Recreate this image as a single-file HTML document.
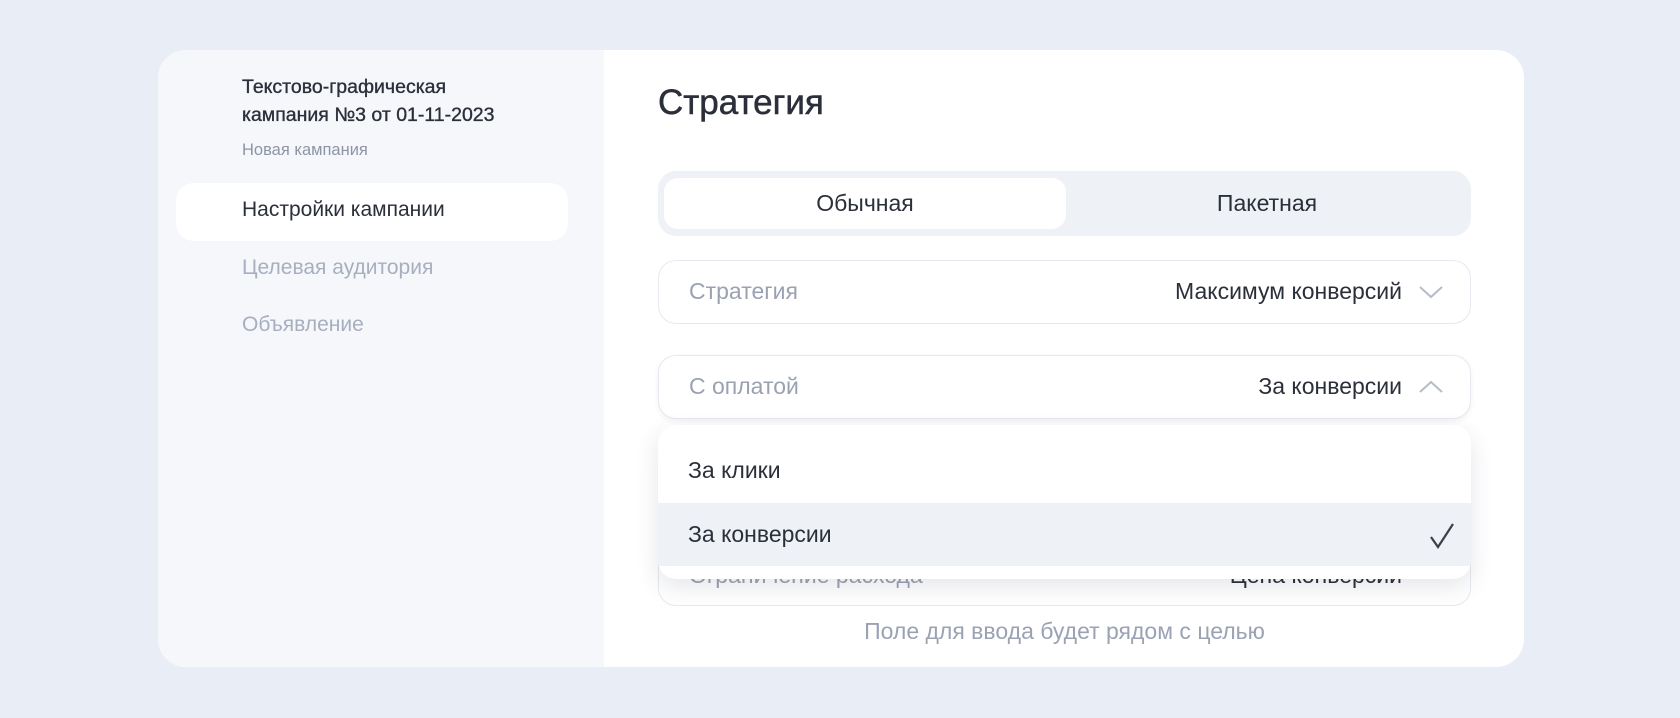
<!DOCTYPE html>
<html><head><meta charset="utf-8"><style>
*{box-sizing:border-box;margin:0;padding:0}
body{width:1680px;height:718px;background:#e9eef6;font-family:"Liberation Sans","DejaVu Sans",sans-serif;position:relative;overflow:hidden;color:#2b2f3a}
.card{position:absolute;left:158px;top:50px;width:1366px;height:617px;border-radius:28px;background:#fff;overflow:hidden}
.side{position:absolute;left:0;top:0;width:446px;height:100%;background:#f5f7fb}
.t{position:absolute;left:84px;font-size:19.5px;line-height:28px;color:#2b2f3a;white-space:nowrap}
.pill{position:absolute;left:18px;top:133px;width:392px;height:58px;border-radius:18px;background:#fff}
.nav{position:absolute;left:84px;font-size:21px;color:#a7afbf;white-space:nowrap}
.a{position:absolute;white-space:nowrap}
.field{position:absolute;left:500px;width:813px;height:64px;border:1.5px solid #e6e9ef;border-radius:18px;background:#fff}
.lab{position:absolute;left:30px;top:0;line-height:61px;font-size:23px;color:#9aa2b2;white-space:nowrap}
.val{position:absolute;right:68px;top:0;line-height:61px;font-size:23px;color:#2b2f3a;white-space:nowrap}
.chev{position:absolute;right:26px;top:23px}
</style></head><body>
<div class="card">
 <div class="side">
  <div class="t" style="top:23px;-webkit-text-stroke:0.35px #2b2f3a">Текстово-графическая<br>кампания №3 от 01-11-2023</div>
  <div class="t" style="top:86px;font-size:16.5px;color:#8d95a5">Новая кампания</div>
  <div class="pill"></div>
  <div class="nav" style="top:148px;color:#2b2f3a">Настройки кампании</div>
  <div class="nav" style="top:206px">Целевая аудитория</div>
  <div class="nav" style="top:263px">Объявление</div>
 </div>
 <div class="a" style="left:500px;top:33px;font-size:35px;-webkit-text-stroke:0.5px #2b2f3a;color:#2b2f3a">Стратегия</div>
 <div class="a" style="left:500px;top:121px;width:813px;height:65px;border-radius:18px;background:#eef1f6"></div>
 <div class="a" style="left:506px;top:128px;width:402px;height:51px;border-radius:14px;background:#fff"></div>
 <div class="a" style="left:506px;top:128px;width:402px;line-height:51px;text-align:center;font-size:23px">Обычная</div>
 <div class="a" style="left:908px;top:128px;width:402px;line-height:51px;text-align:center;font-size:23px">Пакетная</div>
 <div class="field" style="top:210px"><div class="lab">Стратегия</div><div class="val">Максимум конверсий</div>
  <svg class="chev" width="26" height="16" viewBox="0 0 26 16"><path d="M2 3 L13 13 L24 3" fill="none" stroke="#b5bcc9" stroke-width="2"/></svg></div>
 <div class="field" style="top:305px;box-shadow:0 2px 6px rgba(0,0,0,.06)"><div class="lab">С оплатой</div><div class="val">За конверсии</div>
  <svg class="chev" width="26" height="16" viewBox="0 0 26 16"><path d="M2 13 L13 3 L24 13" fill="none" stroke="#b5bcc9" stroke-width="2"/></svg></div>
 <div class="field" style="top:492px"><div class="lab" style="top:2px">Ограничение расхода</div><div class="val" style="top:2px">Цена конверсии</div></div>
 <div class="a" style="left:500px;top:375px;width:813px;height:154px;border-radius:18px;background:#fff;box-shadow:0 8px 24px rgba(40,50,80,.12);overflow:hidden">
  <div class="a" style="left:30px;top:0;line-height:90px;font-size:23px">За клики</div>
  <div class="a" style="left:0;top:78px;width:813px;height:63px;background:#eef1f6"></div>
  <div class="a" style="left:30px;top:78px;line-height:63px;font-size:23px">За конверсии</div>
  <svg class="a" style="left:771px;top:97px" width="26" height="28" viewBox="0 0 26 28"><path d="M2 15 L9 25 L24 2" fill="none" stroke="#3a3f4b" stroke-width="2.2"/></svg>
 </div>
 <div class="a" style="left:500px;top:568px;width:813px;text-align:center;font-size:23px;color:#9aa2b4">Поле для ввода будет рядом с целью</div>
</div>
</body></html>
